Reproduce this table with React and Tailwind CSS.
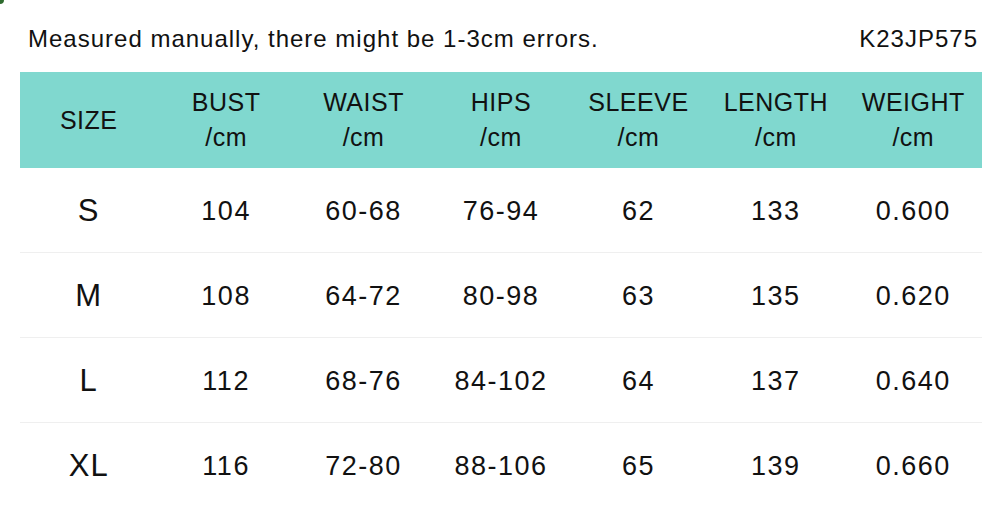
import React from 'react';

const headers = [
  ['SIZE'],
  ['BUST', '/cm'],
  ['WAIST', '/cm'],
  ['HIPS', '/cm'],
  ['SLEEVE', '/cm'],
  ['LENGTH', '/cm'],
  ['WEIGHT', '/cm'],
];

const rows = [
  ['S', '104', '60-68', '76-94', '62', '133', '0.600'],
  ['M', '108', '64-72', '80-98', '63', '135', '0.620'],
  ['L', '112', '68-76', '84-102', '64', '137', '0.640'],
  ['XL', '116', '72-80', '88-106', '65', '139', '0.660'],
];

export default function App() {
  return (
    <div
      className="w-[1000px] h-[510px] bg-white text-[#111] overflow-hidden relative"
      style={{ fontFamily: '"Liberation Sans", Arial, sans-serif' }}
    >
      <div className="absolute left-0 top-0 w-[4px] h-[4px] bg-[#2e6b2e] rounded-br-sm" />
      <div className="flex items-center justify-between pl-[28px] pr-[22px] h-[72px] pt-[6px]">
        <span className="text-[24px] tracking-[1px]">Measured manually, there might be 1-3cm errors.</span>
        <span className="text-[24px] tracking-[1px]">K23JP575</span>
      </div>
      <div className="ml-[20px] w-[962px]">
        <div className="grid grid-cols-7 h-[96px] bg-[#80d8cf]">
          {headers.map((h, i) => (
            <div key={i} className="flex flex-col items-center justify-center text-[25px] leading-[35px] tracking-[0.5px]">
              {h.map((t) => (
                <span key={t}>{t}</span>
              ))}
            </div>
          ))}
        </div>
        {rows.map((r, ri) => (
          <div
            key={ri}
            className={`grid grid-cols-7 h-[85px] ${ri < rows.length - 1 ? 'border-b border-[#efefef]' : ''}`}
          >
            {r.map((c, ci) => (
              <div
                key={ci}
                className={`flex items-center justify-center pt-[2px] ${ci === 0 ? 'text-[31px] tracking-[1px]' : 'text-[27px] tracking-[1.5px]'}`}
              >
                {c}
              </div>
            ))}
          </div>
        ))}
      </div>
    </div>
  );
}
